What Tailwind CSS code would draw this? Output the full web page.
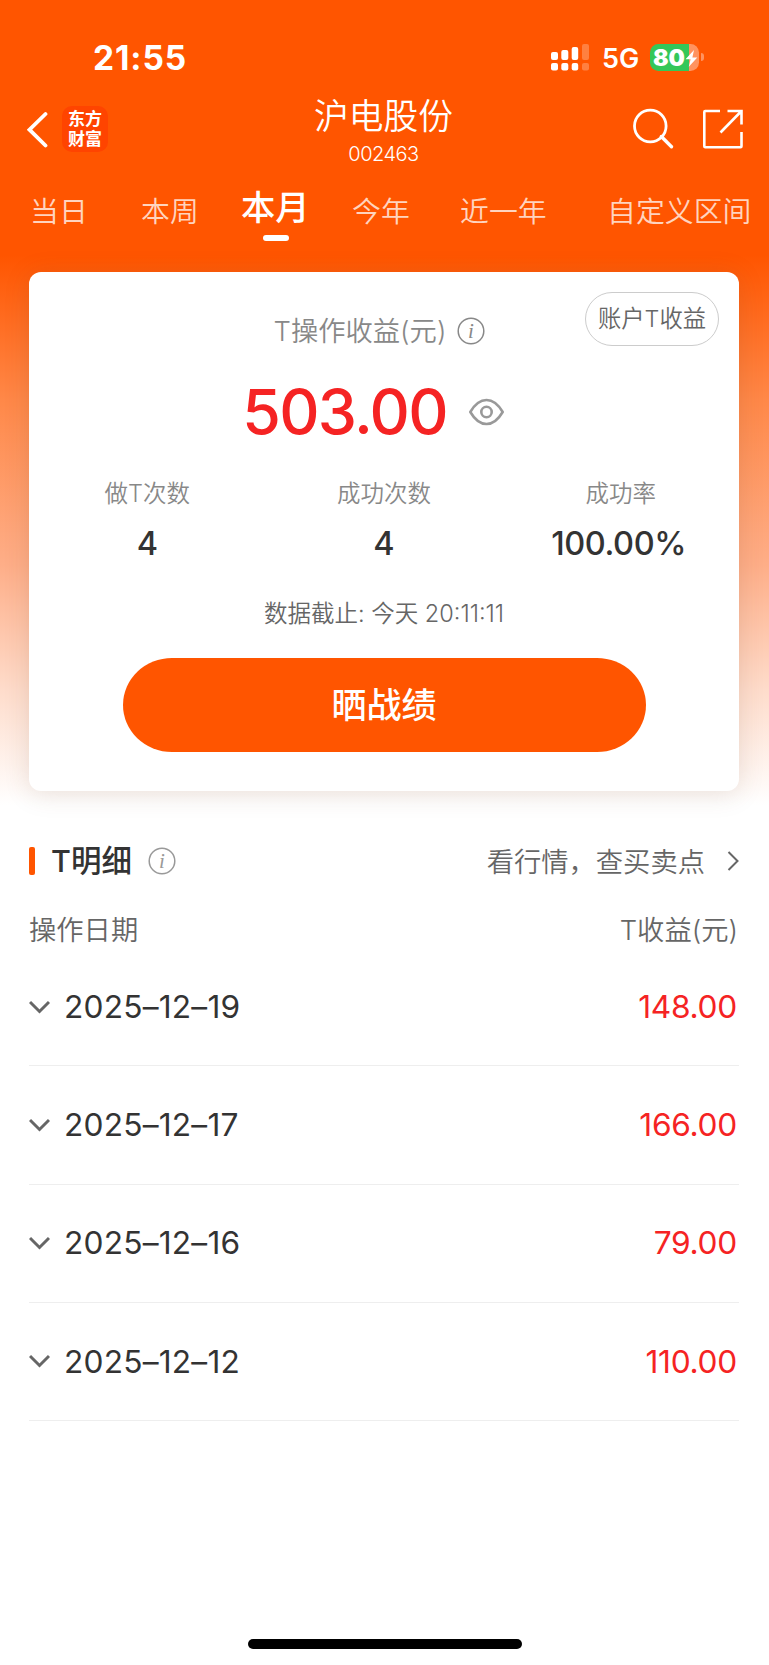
<!DOCTYPE html>
<html lang="zh-CN">

<head>
  <meta charset="UTF-8" />
  <meta name="viewport" content="width=device-width, initial-scale=1.0" />
  <title>沪电股份 T操作收益</title>
  <script src="https://cdn.jsdelivr.net/npm/@tailwindcss/browser@4"></script>
</head>

<body class="bg-white font-['Inter','Noto_Sans_CJK_SC',sans-serif] text-[#333]">
  <div class="w-[769px] h-[1665px] overflow-hidden flex flex-col bg-[linear-gradient(to_bottom,#ff5500_0px,#ff5500_255px,#ff8848_400px,#feae88_565px,#fedccb_690px,#ffffff_805px)]">

    <!-- Status bar -->
    <div class="h-[90px] shrink-0 pl-[93px] pr-[65px] pt-[25px] flex items-start justify-between text-white">
      <span class="text-[33.5px] leading-[67px] font-bold tracking-[0.9px]">21:55</span>
      <div class="flex items-center h-[64px]">
        <svg class="w-[39px] h-[28px]" viewBox="0 0 39 28" fill="currentColor">
          <rect x="0" y="9" width="7" height="8" rx="2" />
          <rect x="10.3" y="7" width="7" height="10" rx="2" />
          <rect x="20.7" y="4" width="6.5" height="13" rx="2" />
          <rect x="0" y="20" width="7" height="7.5" rx="2" />
          <rect x="10.3" y="20" width="7" height="7.5" rx="2" />
          <rect x="20.7" y="20" width="6.5" height="7.5" rx="2" />
          <g opacity=".25">
            <rect x="31" y="1" width="7" height="16" rx="2" />
            <rect x="31" y="20" width="7" height="7.5" rx="2" />
          </g>
        </svg>
        <span class="ml-[12px] w-[48px] text-[27px] leading-[40px] font-semibold pt-[3px]">5G</span>
        <div class="relative w-[49px] h-[27px] rounded-[8.5px] overflow-hidden bg-[linear-gradient(to_right,#34c759_39px,#ff935f_39px)]">
          <span class="absolute left-[3px] top-[1px] text-[23px] leading-[26px] font-black">80</span>
          <svg class="absolute left-[35px] top-[6px] w-[13px] h-[17px]" viewBox="0 0 13 17" fill="currentColor"><path d="M9 0 .5 9.2H5.6L3.8 16.8 12.3 7.4H7.4Z" /></svg>
        </div>
        <div class="ml-[2px] w-[3px] h-[8px] rounded-r-full bg-[#ff935f]"></div>
      </div>
    </div>

    <!-- Nav bar -->
    <div class="h-[90px] shrink-0 flex justify-between text-white">
      <div class="w-[240px] flex pl-[27px] pt-[16px]">
        <svg class="w-[21px] h-[46px]" viewBox="0 0 21 46" fill="none" stroke="currentColor" stroke-width="3.8">
          <path d="M18.5 8 2.5 23.7 18.5 39.5" stroke-linecap="round" stroke-linejoin="miter" />
        </svg>
        <div class="ml-[14px] w-[46px] h-[46px] rounded-[10px] bg-[#ff4400] flex flex-col items-center pt-[4px] text-[17px] leading-[19.5px] font-bold">
          <span>东方</span>
          <span>财富</span>
        </div>
      </div>
      <div class="flex flex-col items-center -ml-[2px]">
        <h1 class="text-[34.7px] leading-[52px] font-[350]">沪电股份</h1>
        <span class="text-[20px] leading-[25px] tracking-[-0.5px] font-[350]">002463</span>
      </div>
      <div class="w-[240px] flex justify-end gap-[29px] pr-[25px] pt-[18px]">
        <svg class="w-[42px] h-[42px]" viewBox="0 0 42 42" fill="none" stroke="currentColor" stroke-width="2.8">
          <circle cx="18.3" cy="18" r="15.8" />
          <path d="M29.3 28.5 39.5 38.7" stroke-width="3.4" stroke-linecap="round" />
        </svg>
        <svg class="w-[41px] h-[42px]" viewBox="0 0 41 42" fill="none" stroke="currentColor" stroke-width="2.6">
          <path d="M17 3H2.2Q1.3 3 1.3 4V38.2Q1.3 39.2 2.3 39.2H37.5Q38.5 39.2 38.5 38.2V24M24.5 3H38.5V16.5M38 3.5 17.5 24.5" />
        </svg>
      </div>
    </div>

    <!-- Period tabs -->
    <div class="h-[92px] shrink-0 text-white/75 text-[28.9px] leading-[64px] font-[350] whitespace-nowrap">
      <div class="flex">
        <span class="ml-[30px] w-[111px]">当日</span>
        <span class="w-[100px]">本周</span>
        <div class="w-[111px] flex flex-col text-white text-[34.3px] leading-[55px] font-medium">
          <span>本月</span>
          <div class="ml-[22px] w-[26px] h-[6px] rounded-full bg-white"></div>
        </div>
        <span class="w-[108px]">今年</span>
        <span class="w-[147px]">近一年</span>
        <span>自定义区间</span>
      </div>
    </div>

    <!-- Profit card -->
    <div class="relative ml-[29px] mr-[30px] h-[519px] shrink-0 rounded-[12px] bg-white shadow-[0_3px_26px_rgba(110,70,40,0.15)] flex flex-col items-center">
      <button class="absolute right-[20px] top-[19.5px] w-[134px] h-[54.5px] rounded-full border border-[#ccc] text-[#666] text-[23.3px] leading-[51px] font-[350]">账户T收益</button>
      <div class="mt-[38px] h-[42px] -ml-[9px] flex items-center text-[#888] text-[27.3px] font-[350]">
        <span class="pt-[2px]">T操作收益(元)</span>
        <svg class="ml-[11px] w-[28px] h-[28px]" viewBox="0 0 28 28" fill="none" stroke="currentColor" stroke-width="1.5">
          <circle cx="14" cy="14" r="12.8" />
          <text x="14" y="20.6" text-anchor="middle" class="font-['Liberation_Serif',serif] italic text-[21px]" fill="currentColor" stroke="none">i</text>
        </svg>
      </div>
      <div class="mt-[20px] h-[80px] -ml-[21px] flex items-center text-[#f52323]">
        <span class="text-[62.5px] font-medium tracking-[-1.7px]">503.00</span>
        <svg class="ml-[21px] w-[37px] h-[30px] text-[#999]" viewBox="0 0 37 30" fill="none" stroke="currentColor" stroke-width="2.6">
          <path d="M2.3 15C7 7 12 3 18.5 3S30 7 34.7 15C30 23 25 27 18.5 27S7 23 2.3 15Z" stroke-linejoin="round" />
          <circle cx="18.5" cy="15" r="5.2" />
        </svg>
      </div>
      <div class="mt-[24px] w-full grid grid-cols-3 text-center">
        <div>
          <p class="text-[23.5px] leading-[36px] text-[#888] font-[350]">做T次数</p>
          <p class="mt-[4px] text-[32.5px] leading-[56px] font-medium">4</p>
        </div>
        <div>
          <p class="text-[23.5px] leading-[36px] text-[#888] font-[350]">成功次数</p>
          <p class="mt-[4px] text-[32.5px] leading-[56px] font-medium">4</p>
        </div>
        <div>
          <p class="text-[23.5px] leading-[36px] text-[#888] font-[350]">成功率</p>
          <p class="mt-[4px] -ml-[4px] text-[32.5px] leading-[56px] tracking-[-0.4px] font-medium">100.00%</p>
        </div>
      </div>
      <p class="mt-[24px] text-[23.5px] leading-[36px] text-[#666] font-[350]">数据截止: 今天 20:11:11</p>
      <button class="mt-[26px] w-[523px] h-[94px] [border-radius:49px/47px] bg-[#ff5500] text-white text-[35px] leading-[91px] font-medium">晒战绩</button>
    </div>

    <!-- Detail section -->
    <div class="mt-[40px] ml-[29px] mr-[30px] h-[60px] shrink-0 flex items-center">
      <div class="w-[6px] h-[28px] rounded-[2px] bg-[#ff5500]"></div>
      <h2 class="ml-[16px] text-[30.5px] font-medium">T明细</h2>
      <svg class="ml-[16px] w-[28px] h-[28px] text-[#999]" viewBox="0 0 28 28" fill="none" stroke="currentColor" stroke-width="1.5">
        <circle cx="14" cy="14" r="12.8" />
        <text x="14" y="20.6" text-anchor="middle" class="font-['Liberation_Serif',serif] italic text-[21px]" fill="currentColor" stroke="none">i</text>
      </svg>
      <a class="ml-auto flex items-center text-[#666] text-[27.3px] font-[350]"><span class="pt-[4px]">看行情，查买卖点</span>
        <svg class="ml-[22px] w-[12px] h-[20px]" viewBox="0 0 12 20" fill="none" stroke="currentColor" stroke-width="2"><path d="M1.5 1 10.5 10 1.5 19" /></svg>
      </a>
    </div>
    <div class="ml-[29px] mr-[30px] h-[57px] shrink-0 flex justify-between text-[#666] text-[27.3px] leading-[79px] font-[350]">
      <span>操作日期</span>
      <span class="mr-[1px]">T收益(元)</span>
    </div>

    <!-- Daily records -->
    <div id="recordList" class="pt-[0.3px] ml-[29px] mr-[30px] text-[31.7px]"></div>

    <!-- Home indicator -->
    <div class="mt-auto mb-[16px] mx-auto w-[274px] h-[10px] shrink-0 rounded-full bg-black"></div>
  </div>

  <script>
    const records = [
      { date: "2025–12–19", profit: "148.00" },
      { date: "2025–12–17", profit: "166.00" },
      { date: "2025–12–16", profit: "79.00" },
      { date: "2025–12–12", profit: "110.00" },
    ];

    const list = document.getElementById("recordList");
    records.forEach((item) => {
      const row = document.createElement("div");
      row.className = "h-[118.2px] flex items-center border-b border-[#eeeeee]";
      row.innerHTML = `
        <svg class="w-[21px] h-[14px] text-[#666]" viewBox="0 0 21 14" fill="none" stroke="currentColor" stroke-width="3"><path d="M1 2 10.5 11.5 20 2" /></svg>
        <span class="ml-[14px] font-[380] tracking-[0.2px]">${item.date}</span>
        <span class="ml-auto mr-[2px] font-[380] tracking-[-0.3px] text-[#f52323]">${item.profit}</span>
      `;
      list.appendChild(row);
    });
  </script>
</body>

</html>
